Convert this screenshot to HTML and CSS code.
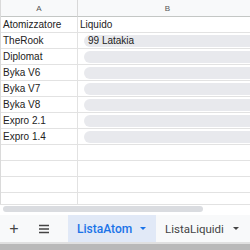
FILE: index.html
```html
<!DOCTYPE html>
<html lang="it">
<head>
    <meta charset="UTF-8">
    <title>ListaAtom</title>
    <link rel="stylesheet" href="styles.css">
</head>
<body>

<div class="sheet">
    <!-- Grid -->
    <div class="grid">
        <div class="col-head">A</div>
        <div class="col-head">B</div>

        <div class="cell">Atomizzatore</div>
        <div class="cell">Liquido</div>

        <div class="cell">TheRook</div>
        <div class="cell"><span class="chip">99 Latakia</span></div>

        <div class="cell">Diplomat</div>
        <div class="cell"><span class="chip"></span></div>

        <div class="cell">Byka V6</div>
        <div class="cell"><span class="chip"></span></div>

        <div class="cell">Byka V7</div>
        <div class="cell"><span class="chip"></span></div>

        <div class="cell">Byka V8</div>
        <div class="cell"><span class="chip"></span></div>

        <div class="cell">Expro 2.1</div>
        <div class="cell"><span class="chip"></span></div>

        <div class="cell">Expro 1.4</div>
        <div class="cell"><span class="chip"></span></div>

        <div class="cell"></div>
        <div class="cell"></div>
        <div class="cell"></div>
        <div class="cell"></div>
        <div class="cell"></div>
        <div class="cell"></div>
        <div class="cell last"></div>
        <div class="cell last"></div>
    </div>

    <!-- Horizontal scrollbar -->
    <div class="hscroll">
        <div class="thumb"></div>
    </div>

    <!-- Sheet tabs -->
    <div class="tabs">
        <span class="tab-btn">+</span>
        <span class="tab-btn">
            <svg width="12" height="10" viewBox="0 0 12 10"><path d="M1 1.5h10M1 5h10M1 8.5h10" stroke="#444" stroke-width="1.4"/></svg>
        </span>
        <div class="tab active">ListaAtom <span class="caret"></span></div>
        <div class="tab">ListaLiquidi <span class="caret"></span></div>
    </div>

    <div class="status"></div>
</div>

</body>
</html>
```

FILE: styles.css
```css
/* Basic Reset */
* {
    margin: 0;
    padding: 0;
    box-sizing: border-box;
}

body {
    font-family: 'Liberation Sans', Arial, sans-serif;
    background-color: white;
    color: #222;
}

.sheet {
    width: 250px;
    height: 250px;
    overflow: hidden;
    display: flex;
    flex-direction: column;
}

/* Grid */
.grid {
    display: grid;
    grid-template-columns: 77px 180px;
    grid-template-rows: 17px repeat(11, 16px) 11px;
    border-left: 1px solid #dadada;
}

.col-head {
    background-color: #f8f9fa;
    border-bottom: 1px solid #c4c7c5;
    border-right: 1px solid #d8d8d8;
    color: #555;
    font-size: 8px;
    display: flex;
    align-items: center;
    justify-content: center;
}

.cell {
    border-bottom: 1px solid #e2e2e2;
    border-right: 1px solid #e2e2e2;
    font-size: 10px;
    line-height: 15px;
    padding-left: 2px;
    white-space: nowrap;
    display: flex;
    align-items: center;
}

.cell.last {
    border-bottom: none;
}

.chip {
    margin-left: 4px;
    height: 12px;
    width: 172px;
    border-radius: 6px;
    background-color: #e8e9ed;
    padding-left: 4px;
    line-height: 12px;
    font-size: 10px;
}

/* Horizontal scrollbar */
.hscroll {
    height: 11px;
    border-top: 1px solid #e2e2e2;
    padding: 1px 0 0 3px;
}

.thumb {
    width: 200px;
    height: 6px;
    border-radius: 3px;
    background-color: #dadce0;
}

/* Tabs */
.tabs {
    height: 27px;
    background-color: #f8f9fa;
    display: flex;
    align-items: stretch;
}

.tab-btn {
    width: 28px;
    display: flex;
    align-items: center;
    justify-content: center;
    font-size: 16px;
    color: #444;
}

.tab-btn + .tab-btn {
    margin-left: 2px;
}

.tab {
    display: flex;
    align-items: center;
    font-family: Roboto, Arial, sans-serif;
    font-size: 11.5px;
    color: #444;
    padding: 0 0 0 9px;
    width: 88px;
    white-space: nowrap;
}

.tab.active {
    margin-left: 10px;
    background-color: #e1e9f7;
    color: #1a73e8;
    font-size: 12px;
    font-weight: 500;
}

.caret {
    display: inline-block;
    margin-left: 9px;
    border-left: 3px solid transparent;
    border-right: 3px solid transparent;
    border-top: 3px solid #444;
}

.tab.active .caret {
    margin-left: 8px;
    border-top-color: #1a73e8;
}

.status {
    flex: 1;
    border-top: 2px solid #e0e0e0;
    background-color: #b9b9b9;
}
```
